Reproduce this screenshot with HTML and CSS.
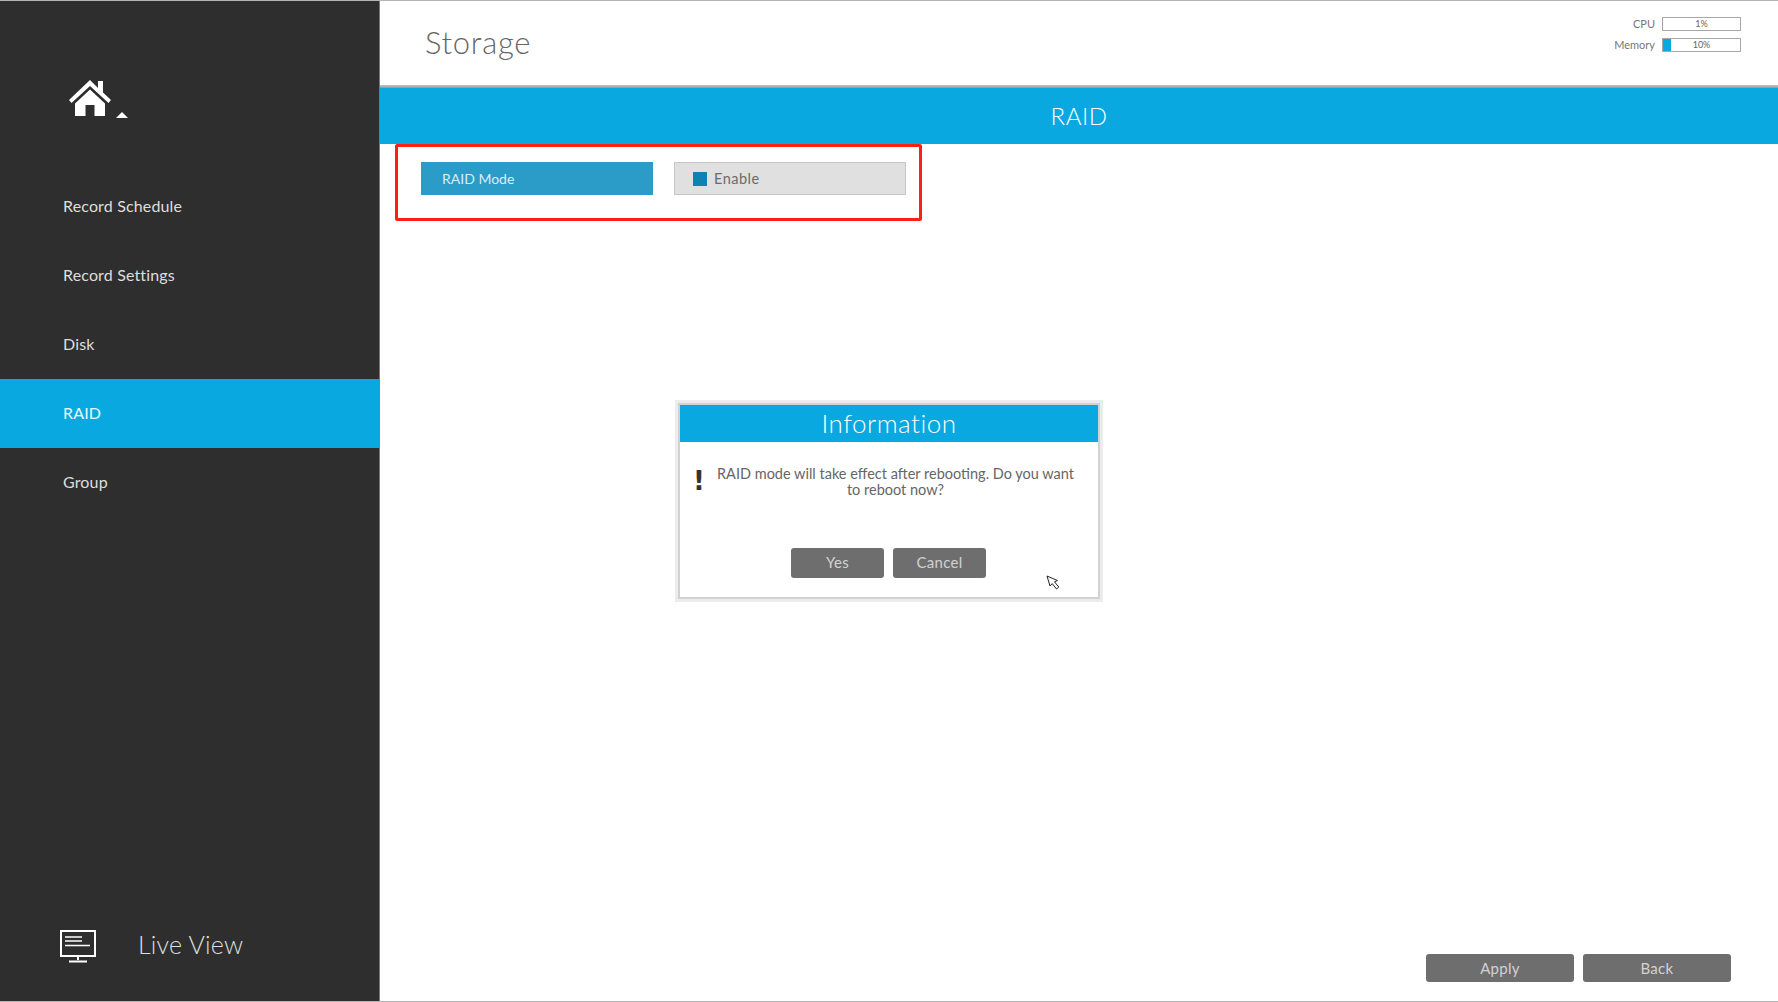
FILE: index.html
```html
<!DOCTYPE html>
<html lang="en">
<head>
<meta charset="utf-8">
<title>Storage - RAID</title>
<link rel="stylesheet" href="styles.css">
</head>
<body>
<div class="app">
  <aside class="sidebar">
    <div class="home">
      <svg class="home-icon" viewBox="0 0 42 36" aria-hidden="true">
        <path fill="#fff" d="M21 0 0 20l2.500 3L21 6l18.500 17 2.500-3-8-7.500V1h-5v7z"/>
        <path fill="#fff" d="M21 9.500 6 23.500V36h10.500V25h9v11H36V23.500z"/>
      </svg>
      <span class="home-caret"></span>
    </div>
    <nav class="nav">
      <a class="nav-item">Record Schedule</a>
      <a class="nav-item">Record Settings</a>
      <a class="nav-item">Disk</a>
      <a class="nav-item is-active">RAID</a>
      <a class="nav-item">Group</a>
    </nav>
    <div class="live-view">
      <svg class="live-icon" viewBox="0 0 36 33" aria-hidden="true">
        <rect x="1" y="1" width="34" height="25" fill="none" stroke="#fff" stroke-width="2"/>
        <path stroke="#fff" stroke-width="1.600" d="M5 7h17M5 11h17M5 15.500h25"/>
        <path stroke="#fff" stroke-width="2" d="M18 26v4M9 31.500h18"/>
      </svg>
      <span>Live View</span>
    </div>
  </aside>
  <main class="main">
    <header class="topbar">
      <h1 class="page-title">Storage</h1>
      <div class="meters">
        <div class="meter">
          <span class="meter-label">CPU</span>
          <div class="meter-track"><span class="meter-text">1%</span></div>
        </div>
        <div class="meter">
          <span class="meter-label">Memory</span>
          <div class="meter-track"><i class="meter-fill"></i><span class="meter-text">10%</span></div>
        </div>
      </div>
    </header>
    <div class="section-title">RAID</div>
    <section class="highlight">
      <div class="field-label">RAID Mode</div>
      <label class="field-value"><i class="checkbox"></i><span>Enable</span></label>
    </section>
    <footer class="actions">
      <button class="btn btn-wide">Apply</button>
      <button class="btn btn-wide">Back</button>
    </footer>
    <div class="dialog">
      <div class="dialog-title">Information</div>
      <div class="dialog-body">
        <span class="bang">!</span>
        <p class="dialog-text">RAID mode will take effect after rebooting. Do you want to reboot now?</p>
      </div>
      <div class="dialog-actions">
        <button class="btn btn-dialog">Yes</button>
        <button class="btn btn-dialog">Cancel</button>
      </div>
      <svg class="cursor" viewBox="0 0 14 15" aria-hidden="true">
        <path fill="#fff" stroke="#222" stroke-width="1" d="M1 1l3 10 2.200-2.400 4.300 5.400 2.300-2-4.300-5.200L11.500 5.500z"/>
      </svg>
    </div>
  </main>
</div>
</body>
</html>
```
FILE: styles.css
```css
* { box-sizing: border-box; }
html, body { margin: 0; height: 100%; }
body {
  background: #fff;
  font-family: "Lato", "Liberation Sans", sans-serif;
  overflow: hidden;
}
.app {
  display: grid;
  grid-template-columns: 380px 1fr;
  height: 1002px;
  border-top: 1px solid #b4b4b4;
  border-bottom: 1px solid #b4b4b4;
}
.sidebar {
  display: flex;
  flex-direction: column;
  background: #2e2e2e;
  border-right: 1px solid #777;
  color: #dedede;
}
.home {
  display: flex;
  align-items: flex-end;
  height: 170px;
  padding: 78px 0 55px 69px;
}
.home-icon { width: 42px; height: 36px; }
.home-caret {
  width: 0;
  height: 0;
  margin-left: 5px;
  margin-bottom: -2px;
  border-left: 6px solid transparent;
  border-right: 6px solid transparent;
  border-bottom: 6px solid #fff;
}
.nav { display: flex; flex-direction: column; }
.nav-item {
  display: flex;
  align-items: center;
  height: 69.200px;
  padding: 0 0 1px 63px;
  font-size: 16px;
  letter-spacing: .15px;
}
.nav-item.is-active { background: #0aa8e0; color: #eafaff; margin-right: -1px; }
.live-view {
  display: flex;
  align-items: center;
  gap: 42px;
  margin-top: auto;
  padding: 0 0 38px 60px;
  font-size: 25px;
  font-weight: 300;
  letter-spacing: .2px;
}
.live-view span { margin-bottom: 4px; }
.live-icon { width: 36px; height: 33px; }

.main { position: relative; display: flex; flex-direction: column; }
.topbar {
  display: flex;
  justify-content: space-between;
  height: 87px;
  background: linear-gradient(#fff 84px, #c4c4c4 84px, #999 87px);
}
.page-title {
  margin: 21px 0 0 45px;
  font-size: 31px;
  line-height: 40px;
  font-weight: 300;
  color: #666;
  letter-spacing: .7px;
}
.meters {
  display: flex;
  flex-direction: column;
  gap: 7px;
  padding: 16px 37px 0 0;
}
.meter { display: flex; align-items: center; gap: 7px; }
.meter-label { width: 60px; text-align: right; font-size: 11px; line-height: 12px; padding-bottom: 1px; color: #777; }
.meter-track {
  position: relative;
  display: flex;
  align-items: center;
  justify-content: center;
  width: 79px;
  height: 14px;
  padding-bottom: 2px;
  border: 1px solid #a8a8a8;
  font-size: 9px;
  color: #666;
}
.meter-fill { position: absolute; left: 0; top: 0; bottom: 0; width: 8px; background: #0aa8e0; }
.meter-text { position: relative; }
.section-title {
  height: 56px;
  line-height: 55px;
  text-align: center;
  background: #0aa8e0;
  color: #fff;
  font-size: 24px;
  font-weight: 300;
  letter-spacing: .5px;
}
.highlight {
  display: flex;
  gap: 21px;
  width: 527px;
  height: 77px;
  margin: 0 0 0 15px;
  padding: 15px 0 0 23px;
  border: 3px solid #ff1f14;
  border-radius: 2px;
}
.field-label, .field-value {
  display: flex;
  align-items: center;
  width: 232px;
  height: 33px;
  font-size: 14.500px;
}
.field-label { padding-left: 21px; background: #2b9bc8; color: #d6f0fa; font-size: 14px; }
.field-value {
  gap: 7px;
  padding-left: 19px;
  background: #e0e0e0;
  border: 1px solid #c6c6c6;
  color: #6b6b6b;
  letter-spacing: .5px;
}
.checkbox { width: 14px; height: 14px; margin-left: -1px; background: #0f82b4; }
.actions {
  display: flex;
  justify-content: flex-end;
  gap: 9px;
  margin-top: auto;
  padding: 0 47px 19px 0;
}
.btn {
  border: 0;
  border-radius: 3px;
  background: #6e6e6e;
  color: #d2d2d2;
  font-family: inherit;
  font-size: 15px;
  letter-spacing: .3px;
  padding: 0 0 2px;
}
.btn-wide { width: 148px; height: 28px; padding: 0; }
.btn-dialog { width: 93px; height: 30px; }
.dialog {
  position: absolute;
  left: 300px;
  top: 404px;
  width: 418px;
  height: 192px;
  display: flex;
  flex-direction: column;
  background: #fff;
  box-shadow: 0 0 0 2px #d2d2d2, 0 0 0 5px #ececec;
}
.dialog-title {
  height: 37px;
  line-height: 37px;
  text-align: center;
  background: #0aa8e0;
  color: #fff;
  font-size: 26px;
  font-weight: 300;
  letter-spacing: .5px;
}
.dialog-body {
  display: flex;
  height: 106px;
  padding: 24px 20px 0 13px;
}
.bang {
  width: 20px;
  font-family: "DejaVu Sans", sans-serif;
  font-size: 26px;
  line-height: 30px;
  font-weight: 700;
  color: #333;
}
.dialog-text {
  flex: 1;
  margin: 0;
  font-size: 14.500px;
  line-height: 15.500px;
  text-align: center;
  color: #666;
}
.dialog-actions { display: flex; gap: 9px; padding-left: 111px; }
.cursor { position: absolute; left: 366px; top: 170px; width: 14px; height: 15px; }
```
